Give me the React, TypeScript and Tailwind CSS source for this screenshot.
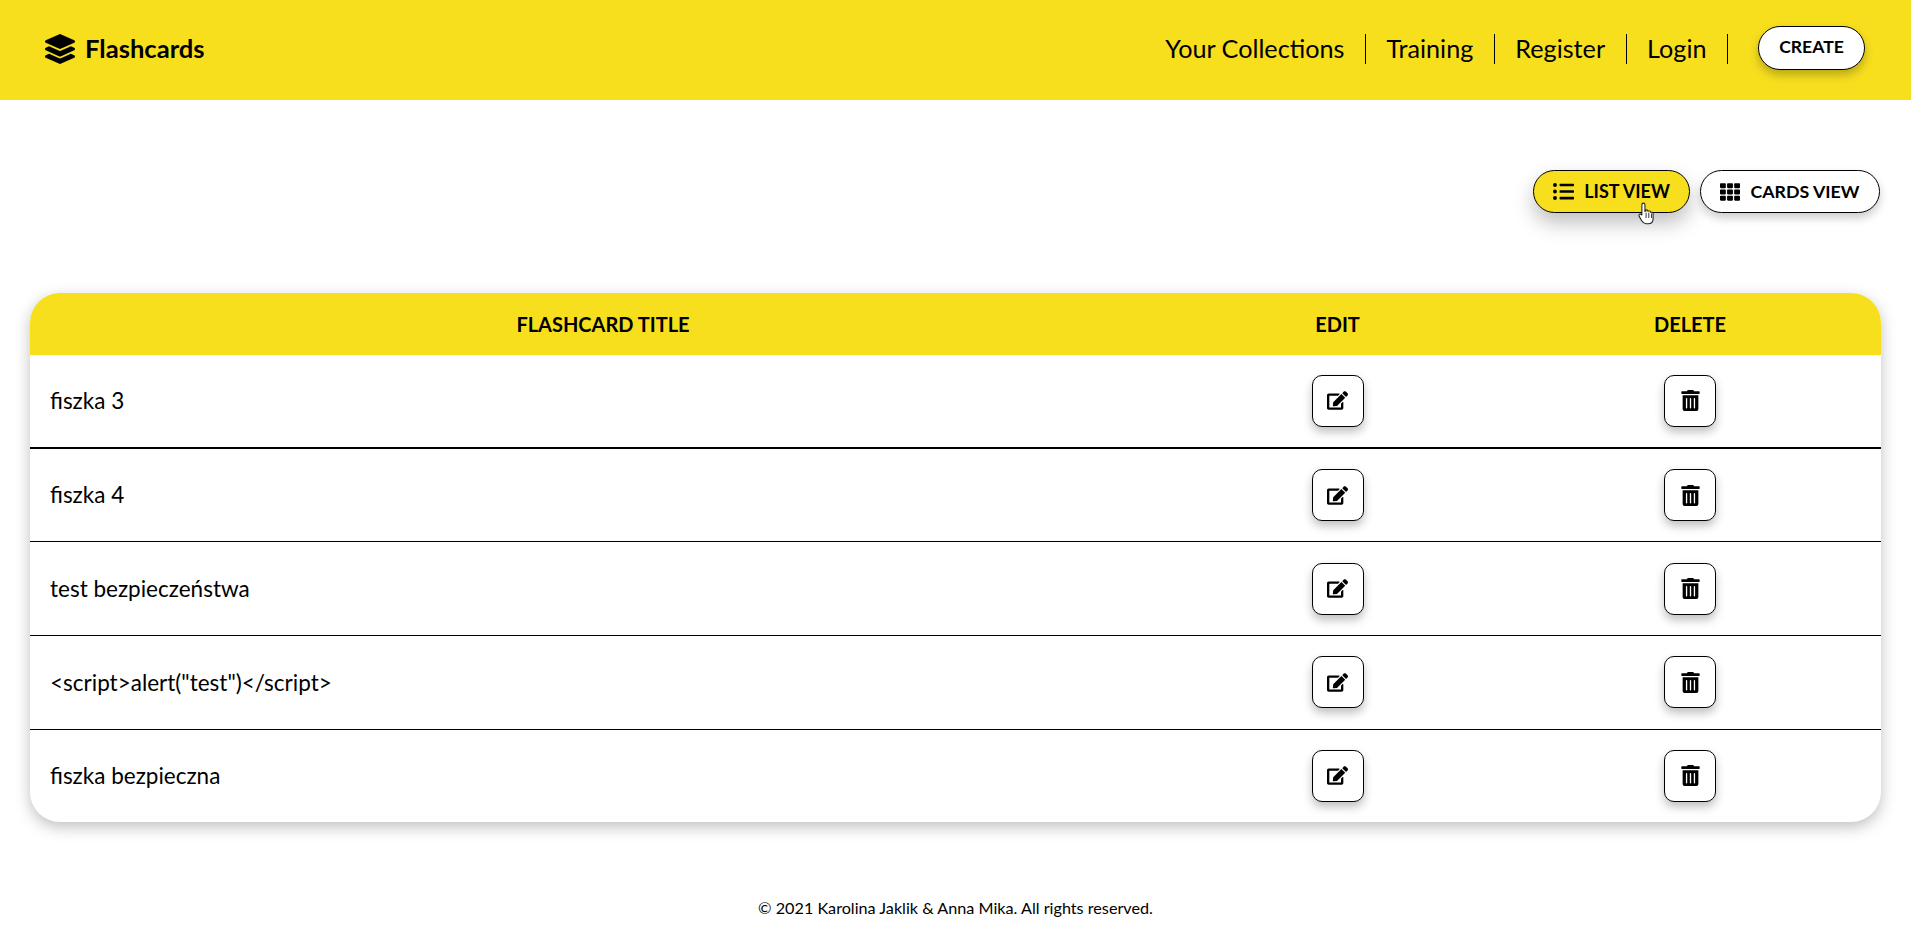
import { FaEdit, FaLayerGroup, FaListUl, FaTh, FaTrashAlt } from 'react-icons/fa';

const rows = ['fiszka 3', 'fiszka 4', 'test bezpieczeństwa', '<script>alert("test")</script>', 'fiszka bezpieczna'];
const links = ['Your Collections', 'Training', 'Register', 'Login'];

function Cursor() {
  return (
    <svg className="absolute left-[104px] top-[30px]" width="18" height="25" viewBox="0 0 20 26">
      <path
        d="M6 1.5c1 0 1.7.8 1.7 1.8v7.2l1-.2V9.2c1.300-.6 2.300 0 2.300 1.200l1-.1c1.200-.4 2 .3 2 1.300l.8 0c1.200-.2 2 .5 2 1.600v5.300c0 3.500-2.200 5.900-5.500 5.900h-2.300c-2.300 0-3.500-1-4.700-3L1.500 16.500c-.7-1.100-.5-2.100.3-2.600.8-.5 1.700-.2 2.400.8l.1.200V3.300C4.300 2.300 5 1.500 6 1.500z"
        fill="#fff"
        stroke="#222"
        strokeWidth="1.2"
      />
      <path d="M9 12v6M12 12v6M15 13v5" stroke="#222" strokeWidth="1" />
    </svg>
  );
}

export default function App() {
  return (
    <div className="min-h-[934px] bg-white text-black font-['Lato','Noto_Sans',sans-serif]">
      <header className="h-[100px] bg-[#f7df1e] flex items-center justify-between pl-[45px] pr-[46px] pb-[2px]">
        <div className="flex items-center gap-[10px] text-[25.6px] font-bold">
          <FaLayerGroup size={30} />
          <span className="pb-[1px]">Flashcards</span>
        </div>
        <nav className="flex items-center">
          {links.map((link) => (
            <a key={link} className="h-[30px] flex items-center px-[20.5px] pb-[1px] border-r border-black text-[25.2px] leading-none">
              {link}
            </a>
          ))}
          <button className="ml-[30px] w-[107px] h-[44px] pb-[2px] -mt-[2px] rounded-full border border-black bg-white text-[17.6px] font-bold shadow-[0_5px_10px_rgba(0,0,0,0.25)]">
            CREATE
          </button>
        </nav>
      </header>

      <main className="px-[30px]">
        <div className="flex justify-end gap-[10px] pt-[70px] pb-[80px] pr-[1px]">
          <button className="relative w-[157px] h-[43px] rounded-full border border-black bg-[#f7df1e] flex items-center justify-center gap-[10px] text-[18px] font-bold shadow-[0_10px_20px_rgba(0,0,0,0.25)]">
            <FaListUl size={21} />
            LIST VIEW
            <Cursor />
          </button>
          <button className="w-[180px] h-[43px] rounded-full border border-black bg-white flex items-center justify-center gap-[10px] text-[17.8px] font-bold shadow-[0_5px_10px_rgba(0,0,0,0.2)]">
            <FaTh size={20} />
            CARDS VIEW
          </button>
        </div>

        <div className="rounded-[30px] overflow-hidden bg-white shadow-[0_5px_15px_rgba(0,0,0,0.25)]">
          <div className="h-[62px] bg-[#f7df1e] grid grid-cols-[1146px_323px_382px] items-center text-center text-[20px] font-bold">
            <div>FLASHCARD TITLE</div>
            <div>EDIT</div>
            <div>DELETE</div>
          </div>
          {rows.map((row, i) => (
            <div
              key={row}
              className={`grid grid-cols-[1146px_323px_382px] items-center ${i < rows.length - 1 ? 'h-[93.7px] border-b border-black' : 'h-[92.2px]'} ${i === 0 ? 'border-b-2' : ''}`}
            >
              <div className="pl-[20px] text-[22.5px]">{row}</div>
              <div className="flex justify-center">
                <button className="w-[52px] h-[52px] rounded-[10px] border border-black bg-white flex items-center justify-center shadow-[0_5px_10px_rgba(0,0,0,0.25)]">
                  <FaEdit size={21} />
                </button>
              </div>
              <div className="flex justify-center">
                <button className="w-[52px] h-[52px] rounded-[10px] border border-black bg-white flex items-center justify-center shadow-[0_5px_10px_rgba(0,0,0,0.25)]">
                  <FaTrashAlt size={21} />
                </button>
              </div>
            </div>
          ))}
        </div>
      </main>

      <footer className="mt-[74px] text-center text-[16.2px]">© 2021 Karolina Jaklik &amp; Anna Mika. All rights reserved.</footer>
    </div>
  );
}
